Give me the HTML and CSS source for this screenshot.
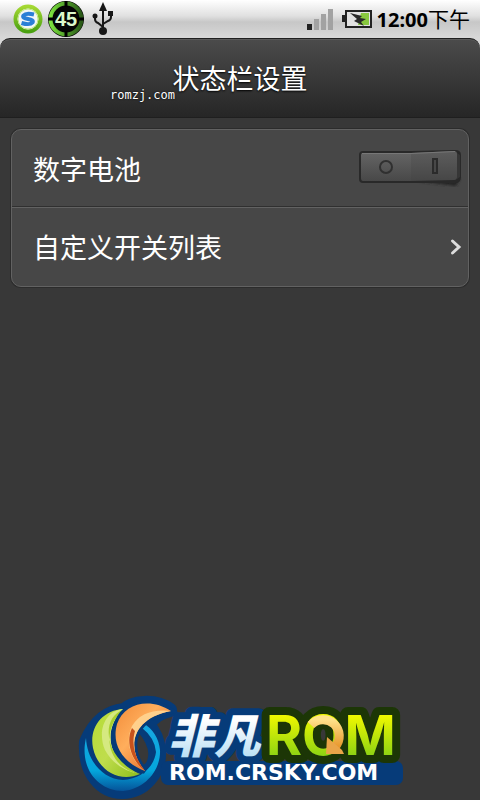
FILE: index.html
```html
<!DOCTYPE html>
<html lang="zh-CN">
<head>
<meta charset="utf-8">
<meta name="viewport" content="width=device-width, initial-scale=1">
<title>状态栏设置</title>
<link rel="stylesheet" href="styles.css">
</head>
<body>
<div class="screen">
  <div class="statusbar">
    <div class="notifications">
      <svg class="icon-sync" width="32" height="32" viewBox="0 0 32 32" aria-hidden="true">
        <defs><linearGradient id="ring" x2="0" y2="1"><stop stop-color="#a4d832"/><stop offset="1" stop-color="#49a010"/></linearGradient></defs>
        <circle cx="16" cy="16" r="12.5" fill="#f3f6f8" stroke="url(#ring)" stroke-width="4"/>
        <circle cx="16" cy="16" r="10" fill="none" stroke="#bfe77b" stroke-width="1"/>
        <path d="M22 11.500Q14 9.500 11.500 12.500Q10 15 16 16Q22 17 20.500 19.500Q18 22.500 9.500 20" fill="none" stroke="#2b7fd6" stroke-width="4"/>
      </svg>
      <svg class="icon-level" width="38" height="38" viewBox="0 0 38 38" role="img" aria-label="45">
        <defs><linearGradient id="level" x2="1"><stop stop-color="#7be03e"/><stop offset=".5" stop-color="#4f9c2a"/><stop offset="1" stop-color="#2b5a18"/></linearGradient></defs>
        <circle cx="19" cy="19" r="18" fill="#050505"/>
        <circle cx="19" cy="19" r="15.500" fill="none" stroke="url(#level)" stroke-width="4"/>
        <path d="M19 1V7M19 31V37M1 19H7M31 19H37" stroke="#000" stroke-width="3"/>
        <text x="19" y="26" text-anchor="middle" class="level-text">45</text>
      </svg>
      <svg class="icon-usb" width="24" height="34" viewBox="0 0 24 34" aria-hidden="true">
        <g fill="none" stroke="#171717" stroke-width="2"><path d="M12 5V29M4 14V17Q4 20 7 21L12 25M20 11V15Q20 18 17 19L12 22"/></g>
        <g fill="#171717"><path d="M12 0 16 9H8Z"/><circle cx="4" cy="14" r="2.500"/><path d="M17 9H22V14H17Z"/><circle cx="12" cy="29" r="4"/></g>
      </svg>
    </div>
    <div class="system">
      <svg width="27" height="22" viewBox="0 0 27 22" aria-hidden="true"><path d="M0 16H5V22H0Z" fill="#222"/><path d="M7 11H12V22H7ZM14 6H19V22H14ZM21 1H26V22H21Z" fill="#a2a2a2"/></svg>
      <svg class="icon-battery" width="31" height="20" viewBox="0 0 31 20" aria-hidden="true">
        <path d="M0 6H3V1H30V19H3V13H0Z" fill="#222"/><path d="M5 3H28V17H5Z" fill="#e2e2e2"/><path d="M19 4H27V16H16Z" fill="#88c83e"/>
        <path d="M8 4 20 7 18 9 24 10 19 13 22 17 12 12 15 10Z" fill="#292929"/>
      </svg>
      <span class="clock"><b>12:00</b>下午</span>
    </div>
  </div>
  <header class="header">
    <h1>状态栏设置</h1>
    <span class="source">romzj.com</span>
  </header>
  <main>
    <div class="card">
      <label class="row" for="digital">
        <span>数字电池</span>
        <span class="toggle">
          <svg width="104" height="40" viewBox="0 0 104 40" aria-hidden="true">
            <defs>
              <linearGradient id="off" x2="0" y2="1"><stop stop-color="#646464"/><stop offset="1" stop-color="#484848"/></linearGradient>
              <linearGradient id="on" x2="0" y2="1"><stop stop-color="#5d5d5d"/><stop offset="1" stop-color="#464646"/></linearGradient>
              <filter id="soft"><feGaussianBlur stdDeviation="1.5"/></filter>
            </defs>
            <path d="M60 33 98 38 102 30Z" fill="#222" filter="url(#soft)"/>
            <path d="M5 3H54L97 2Q103 2 103 7V29Q103 35 97 35H5Q1 35 1 31V7Q1 3 5 3Z" fill="#292929"/>
            <path d="M5 5H53V33H5Q3 33 3 30V7Q3 5 5 5Z" fill="url(#off)"/>
            <path d="M53 5 96 3Q99 3 99 6V29Q99 32 96 32L53 33Z" fill="url(#on)"/>
            <path d="M4 5.500H53L97 3.500" fill="none" stroke="#777"/>
            <path d="M99 5 102 7V29L99 31Z" fill="#363636"/>
            <circle cx="28" cy="19" r="6" fill="none" stroke="#303030" stroke-width="2"/>
            <path d="M75 11H79V25H75Z" fill="#484848" stroke="#2b2b2b" stroke-width="2"/>
          </svg>
          <input id="digital" type="checkbox">
        </span>
      </label>
      <a class="row" href="#switches">
        <span>自定义开关列表</span>
        <svg class="chevron" width="12" height="18" viewBox="0 0 12 18" aria-hidden="true"><path d="M2.500 3 9 9 2.500 15" fill="none" stroke="#ddd" stroke-width="3" stroke-linecap="round"/></svg>
      </a>
    </div>
  </main>
  <footer class="brand">
    <svg width="340" height="112" viewBox="0 0 340 112" role="img" aria-label="非凡ROM ROM.CRSKY.COM">
      <defs>
        <linearGradient id="orange" x2="1" y2="1"><stop stop-color="#f28b38"/><stop offset=".4" stop-color="#ffae5c"/><stop offset="1" stop-color="#db5416"/></linearGradient>
        <linearGradient id="green" x2="1" y2="1"><stop stop-color="#b5dc35"/><stop offset=".5" stop-color="#bfdd4c"/><stop offset="1" stop-color="#8dbe1c"/></linearGradient>
        <linearGradient id="blue" x2="0" y2="1"><stop stop-color="#18a8e2"/><stop offset=".7" stop-color="#04a6dc"/><stop offset="1" stop-color="#055399"/></linearGradient>
        <linearGradient id="ice" x2="0" y2="1"><stop offset=".3" stop-color="#fff"/><stop offset="1" stop-color="#a9d8f3"/></linearGradient>
        <linearGradient id="lime" x2="0" y2="1"><stop offset=".2" stop-color="#f0f800"/><stop offset="1" stop-color="#70c819"/></linearGradient>
        <linearGradient id="gold" x2="0" y2="1"><stop stop-color="#ffe28a"/><stop offset="1" stop-color="#e8972c"/></linearGradient>
      </defs>
      <g fill="#063b79" stroke="#063b79" stroke-width="14" stroke-linejoin="round">
        <path d="M16 54C14 86 32 104 52 104C75 104 90 84 89 64C88 48 82 41 78 37Q84 26 100 22C85 11 62 14 54 22C32 24 22 40 16 54Z"/>
        <path d="M98 80H326V90H98Z"/>
      </g>
      <path d="M68 44Q80 58 78 69Q77 76 73 77Q65 64 66 50Z" fill="#383838"/>
      <path d="M16 50C9 80 28 103 53 103C76 101 91 81 90 62Q88 44 73 35L71 39Q85 50 86 64C84 80 70 91 53 92C32 91 17 72 16 50Z" fill="url(#blue)"/>
      <path d="M54 21C31 22 19 41 23 60C28 83 50 95 70 86C43 80 28 44 54 21Z" fill="url(#green)"/>
      <path d="M54 21C35 22 27 43 35 62Q46 82 70 86C43 80 28 44 54 21Z" fill="#d5e980"/>
      <path d="M54 21C37 28 36 45 42 60Q51 78 70 86C39 81 28 44 54 21Z" fill="#a9d02f"/>
      <path d="M101 23C80 9 54 15 47 36C41 58 54 75 75 83C57 63 59 31 101 23Z" fill="#063b79" stroke="#063b79" stroke-width="6"/>
      <path d="M101 23C80 9 54 15 47 36C41 58 54 75 75 83C57 63 59 31 101 23Z" fill="url(#orange)"/>
      <path d="M101 23Q73 20 62 38C54 55 62 74 75 83C57 63 59 31 101 23Z" fill="#ffd08c"/>
      <path d="M62 40C55 54 62 74 75 83C65 70 61 57 65 43Z" fill="#c8521c"/>
      <text class="cn" x="98" y="65">非凡</text>
      <text class="rom" x="196" y="67">ROM</text>
      <path d="M241 37A16 16 0 1 1 265 59" fill="none" stroke="url(#gold)" stroke-width="9"/>
      <path d="M257 49 272 62 274 66 256 66Z" fill="#eaa548"/>
      <text class="site" x="99" y="92">ROM.CRSKY.COM</text>
    </svg>
  </footer>
</div>
</body>
</html>
```

FILE: styles.css
```css
* { box-sizing: border-box; }

body {
  margin: 0;
  background: #383838;
  color: #fff;
  font-family: "Noto Sans", "Noto Sans CJK SC", sans-serif;
}

.screen {
  display: flex;
  flex-direction: column;
  min-height: 100vh;
}

.statusbar {
  display: flex;
  justify-content: space-between;
  align-items: center;
  height: 48px;
  margin-bottom: -10px;
  padding: 0 10px 10px 12px;
  background: linear-gradient(#fff 0, #e0e0e0 16px, #c7c7c7 22px, #d8d8d8 38px);
  color: #000;
}

.notifications, .system { display: flex; align-items: center; }
.icon-level { margin-left: 3px; }
.icon-usb { margin-left: 6px; }
.icon-battery { margin: 0 4px 0 8px; }
.level-text { font: bold 20px "Liberation Sans", sans-serif; fill: #dcf8cb; }
.clock { font-size: 21px; line-height: 38px; }
.clock b { font-size: 20px; }

.header {
  position: relative;
  height: 80px;
  border: 1px solid #1f1f1f;
  border-width: 1px 0;
  border-radius: 10px 10px 0 0;
  background: linear-gradient(#4b4b4b, #262626);
  box-shadow: inset 0 1px #5b5b5b;
}

.header h1 {
  margin: 0;
  font-size: 27px;
  font-weight: 400;
  line-height: 80px;
  text-align: center;
  text-shadow: 0 1px 2px #000;
}

.source {
  position: absolute;
  left: 110px;
  top: 48px;
  font: 12px/16px "DejaVu Sans Mono", monospace;
  text-shadow: 0 0 2px #000;
}

main { padding: 11px; }

.card {
  border: 1px solid #626262;
  border-radius: 10px;
  background: #474747;
  box-shadow: 0 0 0 1px #2c2c2c;
}

.row {
  display: flex;
  align-items: center;
  justify-content: space-between;
  height: 76px;
  padding: 0 6px 0 21px;
  color: #fff;
  font-size: 27px;
  text-decoration: none;
}

.row + .row {
  height: 80px;
  border-top: 1px solid #303030;
  box-shadow: inset 0 1px #626262;
}

.toggle { display: grid; }
.toggle > * { grid-area: 1 / 1; }
.toggle input { width: 100%; height: 100%; margin: 0; opacity: 0; }

.brand { margin-top: auto; padding-left: 70px; }
.brand svg { display: block; }

.cn, .rom {
  paint-order: stroke;
  stroke-linejoin: round;
}

.cn {
  font: italic 900 46px "Noto Sans CJK SC", sans-serif;
  fill: url(#ice);
  stroke: #063b79;
  stroke-width: 14px;
}

.rom {
  font: 700 55px Inter, sans-serif;
  fill: url(#lime);
  stroke: #1c3606;
  stroke-width: 16px;
}

.site { font: bold 22px "DejaVu Sans", sans-serif; fill: #fff; }
```
